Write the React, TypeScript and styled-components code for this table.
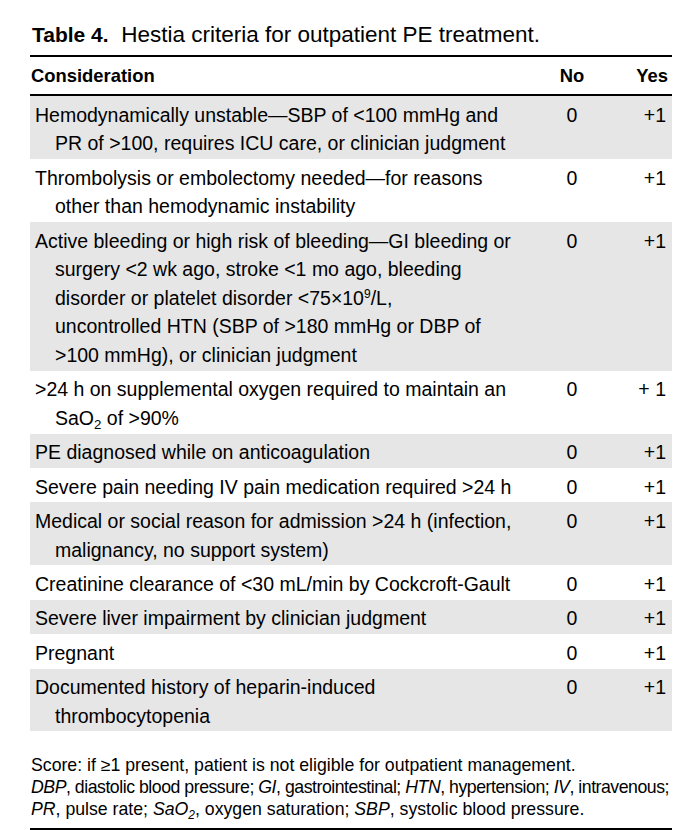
import React from "react";
import styled, { createGlobalStyle } from "styled-components";

const GlobalStyle = createGlobalStyle`
  html, body {
    margin: 0;
    padding: 0;
    background: #ffffff;
  }
  body {
    font-family: "Liberation Sans", Arial, sans-serif;
    color: #000000;
  }
`;

const Page = styled.div`
  width: 642px;
  padding: 20px 0 0 30px;
`;

const Title = styled.div`
  font-size: 22.5px;
  line-height: 30px;
  padding-left: 2px;
  height: 35px;
  white-space: pre;
`;

const TitleLabel = styled.span`
  font-weight: 700;
  font-size: 21px;
`;

const Table = styled.div`
  border-top: 2px solid #000;
  border-bottom: 2px solid #000;
`;

const HeaderRow = styled.div`
  display: grid;
  grid-template-columns: 1fr 60px 70px;
  align-items: center;
  height: 39px;
  padding-top: 1px;
  box-sizing: border-box;
  border-bottom: 2px solid #000;
  font-weight: 700;
  font-size: 18.4px;
`;

const HeadCell = styled.div<{ $align: "left" | "center" | "right" }>`
  text-align: ${(p) => p.$align};
  padding: ${(p) => (p.$align === "left" ? "0 0 0 1px" : p.$align === "right" ? "0 4px 0 0" : "0")};
`;

const Row = styled.div<{ $shaded: boolean }>`
  display: grid;
  grid-template-columns: 1fr 60px 70px;
  background: ${(p) => (p.$shaded ? "#e6e6e6" : "#ffffff")};
  padding: 4.7px 0 1.1px;
  font-size: 19.5px;
  line-height: 28.6px;
`;

const Consideration = styled.div`
  padding-left: 5px;
`;

const Line = styled.div<{ $indent: boolean }>`
  padding-left: ${(p) => (p.$indent ? "20px" : "0")};
  white-space: nowrap;
`;

const Score = styled.div<{ $align: "center" | "right" }>`
  text-align: ${(p) => p.$align};
  padding-right: ${(p) => (p.$align === "right" ? "6px" : "0")};
`;

const Notes = styled.div`
  padding: 24px 0 7px 1px;
  font-size: 17.7px;
  line-height: 21.8px;
`;

const NoteLine = styled.div<{ $tight?: boolean }>`
  white-space: nowrap;
  letter-spacing: ${(p) => (p.$tight ? "-0.47px" : "0")};
`;

const Sub = styled.sub`
  font-size: 0.68em;
  line-height: 0;
  vertical-align: -0.3em;
`;

const Sup = styled.sup`
  font-size: 0.62em;
  line-height: 0;
  vertical-align: 0.55em;
`;

type RowData = { lines: React.ReactNode[]; yes: string };

const rows: RowData[] = [
  {
    lines: [
      "Hemodynamically unstable\u2014SBP of <100 mmHg and",
      "PR of >100, requires ICU care, or clinician judgment",
    ],
    yes: "+1",
  },
  {
    lines: [
      "Thrombolysis or embolectomy needed\u2014for reasons",
      "other than hemodynamic instability",
    ],
    yes: "+1",
  },
  {
    lines: [
      "Active bleeding or high risk of bleeding\u2014GI bleeding or",
      "surgery <2 wk ago, stroke <1 mo ago, bleeding",
      <>
        disorder or platelet disorder {"<"}75×10<Sup>9</Sup>/L,
      </>,
      "uncontrolled HTN (SBP of >180 mmHg or DBP of",
      ">100 mmHg), or clinician judgment",
    ],
    yes: "+1",
  },
  {
    lines: [
      ">24 h on supplemental oxygen required to maintain an",
      <>
        SaO<Sub>2</Sub> of {">"}90%
      </>,
    ],
    yes: "+ 1",
  },
  { lines: ["PE diagnosed while on anticoagulation"], yes: "+1" },
  { lines: ["Severe pain needing IV pain medication required >24 h"], yes: "+1" },
  {
    lines: [
      "Medical or social reason for admission >24 h (infection,",
      "malignancy, no support system)",
    ],
    yes: "+1",
  },
  { lines: ["Creatinine clearance of <30 mL/min by Cockcroft-Gault"], yes: "+1" },
  { lines: ["Severe liver impairment by clinician judgment"], yes: "+1" },
  { lines: ["Pregnant"], yes: "+1" },
  {
    lines: ["Documented history of heparin-induced", "thrombocytopenia"],
    yes: "+1",
  },
];

export default function App() {
  return (
    <>
      <GlobalStyle />
      <Page>
        <Title>
          <TitleLabel>Table 4.</TitleLabel>
          {"  Hestia criteria for outpatient PE treatment."}
        </Title>
        <Table>
          <HeaderRow>
            <HeadCell $align="left">Consideration</HeadCell>
            <HeadCell $align="center">No</HeadCell>
            <HeadCell $align="right">Yes</HeadCell>
          </HeaderRow>
          {rows.map((r, i) => (
            <Row key={i} $shaded={i % 2 === 0}>
              <Consideration>
                {r.lines.map((l, j) => (
                  <Line key={j} $indent={j > 0}>
                    {l}
                  </Line>
                ))}
              </Consideration>
              <Score $align="center">0</Score>
              <Score $align="right">{r.yes}</Score>
            </Row>
          ))}
          <Notes>
            <NoteLine>
              Score: if ≥1 present, patient is not eligible for outpatient management.
            </NoteLine>
            <NoteLine $tight>
              <i>DBP</i>, diastolic blood pressure; <i>GI</i>, gastrointestinal; <i>HTN</i>,
              hypertension; <i>IV</i>, intravenous;
            </NoteLine>
            <NoteLine>
              <i>PR</i>, pulse rate; <i>SaO</i>
              <Sub>
                <i>2</i>
              </Sub>
              , oxygen saturation; <i>SBP</i>, systolic blood pressure.
            </NoteLine>
          </Notes>
        </Table>
      </Page>
    </>
  );
}
